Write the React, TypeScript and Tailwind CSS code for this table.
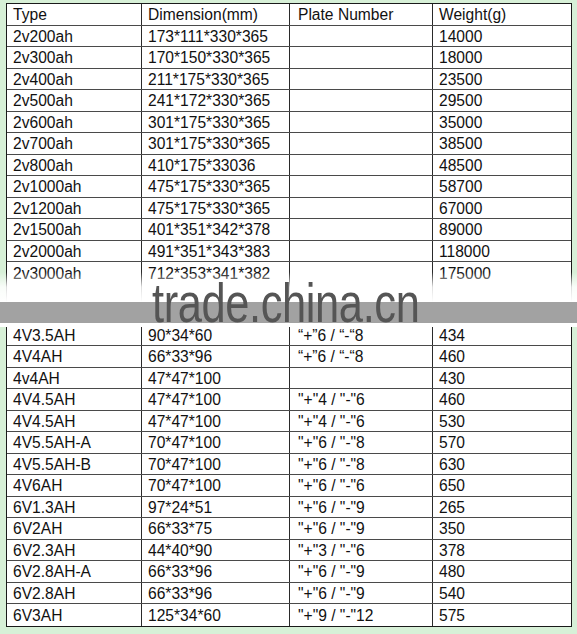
import React from 'react';

type Row = [string, string, string, string];

const TOP_ROWS: Row[] = [
  ['2v200ah', '173*111*330*365', '', '14000'],
  ['2v300ah', '170*150*330*365', '', '18000'],
  ['2v400ah', '211*175*330*365', '', '23500'],
  ['2v500ah', '241*172*330*365', '', '29500'],
  ['2v600ah', '301*175*330*365', '', '35000'],
  ['2v700ah', '301*175*330*365', '', '38500'],
  ['2v800ah', '410*175*33036', '', '48500'],
  ['2v1000ah', '475*175*330*365', '', '58700'],
  ['2v1200ah', '475*175*330*365', '', '67000'],
  ['2v1500ah', '401*351*342*378', '', '89000'],
  ['2v2000ah', '491*351*343*383', '', '118000'],
  ['2v3000ah', '712*353*341*382', '', '175000'],
];

const BOTTOM_ROWS: Row[] = [
  ['4V3.5AH', '90*34*60', '\u201c+\u201d6 / \u201c-\u201c8', '434'],
  ['4V4AH', '66*33*96', '\u201c+\u201d6 / \u201c-\u201c8', '460'],
  ['4v4AH', '47*47*100', '', '430'],
  ['4V4.5AH', '47*47*100', '"+"4 / "-"6', '460'],
  ['4V4.5AH', '47*47*100', '"+"4 / "-"6', '530'],
  ['4V5.5AH-A', '70*47*100', '"+"6 / "-"8', '570'],
  ['4V5.5AH-B', '70*47*100', '"+"6 / "-"8', '630'],
  ['4V6AH', '70*47*100', '"+"6 / "-"6', '650'],
  ['6V1.3AH', '97*24*51', '"+"6 / "-"9', '265'],
  ['6V2AH', '66*33*75', '"+"6 / "-"9', '350'],
  ['6V2.3AH', '44*40*90', '"+"3 / "-"6', '378'],
  ['6V2.8AH-A', '66*33*96', '"+"6 / "-"9', '480'],
  ['6V2.8AH', '66*33*96', '"+"6 / "-"9', '540'],
  ['6V3AH', '125*34*60', '"+"9 / "-"12', '575'],
];

const TableRow = ({ row, last }: { row: Row; last?: boolean }) => (
  <div
    className={`grid grid-cols-[135px_148px_143px_139px] h-[21.5px] ${last ? '' : 'border-b border-[#4a4a4a]'}`}
  >
    {row.map((cell, i) => (
      <div
        key={i}
        className={`flex items-center pt-[2px] whitespace-nowrap overflow-hidden ${i === 0 ? 'pl-[6px]' : i === 2 ? 'pl-[8px]' : 'pl-[6px]'} ${i < 3 ? 'border-r border-[#2a2a2a]' : ''}`}
      >
        {cell}
      </div>
    ))}
  </div>
);

export default function App() {
  return (
    <div className="relative w-[577px] h-[634px] bg-[#d7f0d7] pl-[6px] pt-[3px] overflow-hidden">
      <div
        className="w-[566px] bg-white border border-[#1a1a1a] text-[15.6px] leading-none text-[#111]"
        style={{ fontFamily: '"Liberation Sans", Arial, sans-serif' }}
      >
        <TableRow row={['Type', 'Dimension(mm)', 'Plate Number', 'Weight(g)']} />
        {TOP_ROWS.map((r, i) => (
          <TableRow key={`t${i}`} row={r} last={i === TOP_ROWS.length - 1} />
        ))}
        <div className="grid grid-cols-[135px_148px_143px_139px] h-[41px] border-b border-[#4a4a4a]">
          <div className="border-r border-[#2a2a2a]" />
          <div className="border-r border-[#2a2a2a]" />
          <div className="border-r border-[#2a2a2a]" />
          <div />
        </div>
        {BOTTOM_ROWS.map((r, i) => (
          <TableRow key={`b${i}`} row={r} last={i === BOTTOM_ROWS.length - 1} />
        ))}
      </div>

      {/* trade.china.cn watermark band */}
      <div className="absolute left-0 top-[272px] w-[577px] h-[55px] flex flex-col">
        <div className="h-[30px] bg-gradient-to-b from-white/0 via-white/85 to-white" />
        <div className="h-[21px] bg-[#a2a2a2]" />
        <div className="h-[4px] bg-white" />
        <div
          className="absolute left-[152px] top-[4px] text-[55px] leading-none text-[#555] origin-left scale-x-[0.79] tracking-[-0.5px] whitespace-nowrap"
          style={{ fontFamily: '"Liberation Sans", Arial, sans-serif' }}
        >
          trade.china.cn
        </div>
      </div>
    </div>
  );
}
